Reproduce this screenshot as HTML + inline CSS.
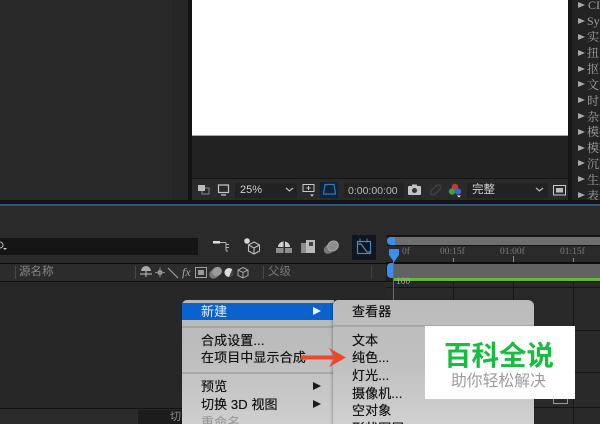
<!DOCTYPE html>
<html><head><meta charset="utf-8">
<style>
html,body{margin:0;padding:0;background:#282828}
#p{position:relative;width:600px;height:424px;overflow:hidden;background:#282828;font-family:"Liberation Sans","Noto Sans CJK SC",sans-serif;filter:blur(.35px)}
#p div,#p span{position:absolute;white-space:nowrap}
.m{color:#141414;font-size:13px;line-height:17px;letter-spacing:.1px;text-shadow:0 0 .4px #141414}
.r{color:#a2a2a2;font-size:12px;line-height:14px;left:578px;font-family:"Liberation Serif","Noto Serif CJK SC",serif}
.t{width:0;height:0;border-left:7px solid #a8a8a8;border-top:3.5px solid transparent;border-bottom:3.5px solid transparent;left:578px}
.a{width:0;height:0;border-left:8px solid #1a1a1a;border-top:4.5px solid transparent;border-bottom:4.5px solid transparent;left:313px}
.k{color:#7d7d7d;font-size:9.5px;font-family:"Liberation Serif",serif;top:246px;line-height:12px}
.h{background:#8a8a8a;width:1px}
</style></head><body><div id="p">
<!-- upper -->
<div style="left:0;top:0;width:172px;height:200px;background:#292929"></div>
<div style="left:172px;top:0;width:17px;height:200px;background:#262626"></div>
<div style="left:188px;top:0;width:4px;height:200px;background:#111"></div>
<div style="left:192px;top:0;width:376px;height:178px;background:#222"></div>
<div style="left:192px;top:0;width:376px;height:135px;background:#fff;border-bottom:1px solid #aaa"></div>
<div style="left:192px;top:178px;width:376px;height:22px;background:#2a2a2a;border-top:1px solid #151515;box-sizing:border-box"></div>
<div style="left:568px;top:0;width:4px;height:200px;background:#161616"></div>
<div style="left:572px;top:0;width:28px;height:200px;background:#232323"></div>
<!-- right list -->
<div class="t" style="top:2px"></div><div class="r" style="top:-2px;left:588px">CIN</div>
<div class="t" style="top:18px"></div><div class="r" style="top:14px;left:587px">Sym</div>
<div class="t" style="top:34px"></div><div class="r" style="top:30px;left:587px">实用</div>
<div class="t" style="top:50px"></div><div class="r" style="top:46px;left:587px">扭曲</div>
<div class="t" style="top:66px"></div><div class="r" style="top:62px;left:587px">抠像</div>
<div class="t" style="top:81px"></div><div class="r" style="top:78px;left:587px">文本</div>
<div class="t" style="top:97px"></div><div class="r" style="top:94px;left:587px">时间</div>
<div class="t" style="top:113px"></div><div class="r" style="top:110px;left:587px">杂色</div>
<div class="t" style="top:129px"></div><div class="r" style="top:125px;left:587px">模拟</div>
<div class="t" style="top:145px"></div><div class="r" style="top:141px;left:587px">模糊</div>
<div class="t" style="top:160px"></div><div class="r" style="top:157px;left:587px">沉浸</div>
<div class="t" style="top:176px"></div><div class="r" style="top:173px;left:587px">生成</div>
<div class="t" style="top:192px"></div><div class="r" style="top:189px;left:587px">表达</div>
<!-- viewer toolbar -->
<div style="left:235px;top:183px;width:62px;height:15px;background:#222"></div>
<div style="left:240px;top:183px;color:#d0d0d0;font-size:11px;line-height:15px">25%</div>
<div style="left:344px;top:183px;width:60px;height:15px;background:#232323"></div>
<div style="left:348px;top:183px;color:#b8b8b8;font-size:10.5px;line-height:16px">0:00:00:00</div>
<div style="left:320px;top:182px;width:18px;height:16px;background:#0e2238"></div>
<div style="left:467px;top:183px;width:81px;height:15px;background:#222"></div>
<div style="left:472px;top:182px;color:#cfcfcf;font-size:11.5px;line-height:17px">完整</div>
<svg style="position:absolute;left:0;top:0" width="600" height="210" fill="none">
<rect x="198" y="185" width="7" height="6" fill="#bbb"/><path d="M205 188h4v6h-7v-3" stroke="#888"/>
<path d="M218.500 185h10v7.500h-10zM221 195h5" stroke="#c4c4c4" stroke-width="1.200"/>
<path d="M286 188l3.500 3 3.500-3M536 188l3.500 3 3.500-3" stroke="#bbb" stroke-width="1.200"/>
<path d="M303 184.500h11v7h-11zM308.500 186v4M306.500 188h4" stroke="#c8c8c8"/><path d="M310 194.500h4l-2 2z" fill="#ddd"/>
<path d="M325 184.500h9l1.500 9.500h-12z" stroke="#3d75b8" stroke-width="1.200"/>
<rect x="408" y="186" width="13" height="9" rx="1" fill="#c4c4c4"/><rect x="412" y="184.500" width="5" height="2" fill="#c4c4c4"/><circle cx="414.500" cy="190.500" r="2.500" fill="#333"/>
<path d="M431 191l5-5a2.500 2.500 0 0 1 4 3l-5 5a2.500 2.500 0 0 1-4-3z" stroke="#404040" stroke-width="1.500"/>
<circle cx="455" cy="187" r="3.200" fill="#c43a3a"/><circle cx="452" cy="191.500" r="3.200" fill="#3f9c48"/><circle cx="458" cy="191.500" r="3.200" fill="#3a66c0"/><path d="M457 195.500h4l-2 2z" fill="#eee"/>
<rect x="553.500" y="185.500" width="12" height="9.500" stroke="#c8c8c8"/><rect x="556" y="188" width="7" height="4.500" fill="#bbb"/>
</svg>
<!-- divider -->
<div style="left:0;top:200px;width:600px;height:4px;background:#121518"></div>
<div style="left:0;top:204px;width:600px;height:2px;background:#33557f"></div>
<div style="left:0;top:206px;width:600px;height:57px;background:#2a2a2a"></div>
<!-- search -->
<div style="left:0;top:238px;width:198px;height:17px;background:#151515"></div>
<svg style="position:absolute;left:0;top:240px" width="10" height="12" fill="none"><circle cx="0" cy="5" r="3" stroke="#bbb"/><path d="M3 8h4l-2 2z" fill="#ccc"/></svg>
<!-- timeline tool icons -->
<svg style="position:absolute;left:205px;top:232px" width="180" height="30" fill="none">
<rect x="8" y="9" width="7" height="2.500" fill="#ddd"/><path d="M15 10.500h6M21 10.500v8M21 12.500h3M21 15.500h3M21 19h2" stroke="#b5b5b5"/>
<circle cx="42" cy="9" r="2.800" fill="#d8d8d8"/><path d="M49 10l5.500 3v6l-5.500 3-5.500-3v-6zM43.500 13l5.500 3 5.500-3M49 16v6" stroke="#bdbdbd" stroke-width="1.100"/>
<rect x="71" y="16" width="16" height="5" fill="#8d8d8d"/><path d="M73 15a6 5.500 0 0 1 12 0z" fill="#cfcfcf"/><rect x="78.500" y="9" width="1.500" height="12" fill="#333"/>
<rect x="96" y="11" width="8" height="10" fill="#8e8e8e"/><rect x="101" y="8" width="9" height="13" fill="#bbb"/><rect x="104" y="10" width="4" height="4" fill="#444"/>
<ellipse cx="124" cy="17" rx="5.500" ry="4.500" transform="rotate(-35 124 17)" fill="#777"/><ellipse cx="128" cy="14" rx="5.500" ry="4.800" transform="rotate(-35 128 14)" stroke="#aaa" fill="#8e8e8e"/>
</svg>
<div style="left:352px;top:235px;width:24px;height:25px;background:#10161e"></div>
<svg style="position:absolute;left:352px;top:235px" width="24" height="25" fill="none"><rect x="5.500" y="6.500" width="13" height="12" stroke="#4c86c4" stroke-width="1.200"/><path d="M8 3.500v4M15 3.500v4" stroke="#4c86c4"/><path d="M6 9h3l6 8h3" stroke="#4c86c4" stroke-width="1.200"/></svg>
<!-- header row -->
<div style="left:0;top:263px;width:386px;height:19px;background:#2c2c2c;border-top:1px solid #0c0c0c;border-bottom:1px solid #0c0c0c;box-sizing:border-box"></div>
<div style="left:15px;top:266px;width:1px;height:13px;background:#4a4a4a"></div>
<div style="left:19px;top:264px;color:#868686;font-size:11.500px;line-height:17px">源名称</div>
<div style="left:135px;top:266px;width:1px;height:13px;background:#4a4a4a"></div>
<svg style="position:absolute;left:136px;top:264px" width="130" height="17" fill="none">
<path d="M5 7a5 5 0 0 1 10 0z" fill="#aaa"/><path d="M10 4v9M4 10h12" stroke="#aaa" stroke-width="1.200"/>
<circle cx="24" cy="8.500" r="2.500" fill="#a8a8a8"/><path d="M24 3.500v10M19 8.500h10" stroke="#888"/>
<path d="M32 4l10 10" stroke="#a0a0a0" stroke-width="1.200"/>
<rect x="59.500" y="3.500" width="11" height="10" stroke="#a0a0a0"/><rect x="62" y="6" width="6" height="5" fill="#999"/>
<ellipse cx="78" cy="10" rx="5" ry="4.500" transform="rotate(-35 78 10)" fill="#777"/><ellipse cx="81" cy="7.500" rx="5" ry="4.500" transform="rotate(-35 81 7.500)" fill="#9a9a9a"/>
<circle cx="93" cy="8.500" r="4.500" fill="#ddd"/><path d="M93 13a4.500 4.500 0 0 0 3.200-7.700z" fill="#444"/>
<path d="M107 3.500l5 2.500v5.500l-5 2.500-5-2.500V6zM102 6l5 2.500 5-2.500M107 8.500V14" stroke="#a8a8a8"/>
</svg>
<div style="left:182px;top:264px;color:#a8a8a8;font-size:12px;line-height:17px;font-style:italic;font-family:'Liberation Serif',serif">fx</div>
<div style="left:263px;top:266px;width:1px;height:13px;background:#4a4a4a"></div>
<div style="left:268px;top:264px;color:#777;font-size:11.500px;line-height:17px">父级</div>
<div style="left:371px;top:266px;width:1px;height:13px;background:#444"></div>
<!-- body -->
<div style="left:0;top:282px;width:386px;height:126px;background:#272727"></div>
<div style="left:0;top:408px;width:386px;height:16px;background:#2b2b2b;border-top:1px solid #111;box-sizing:border-box"></div>
<div style="left:138px;top:410px;width:46px;height:14px;background:#1c1c1c"></div>
<div style="left:170px;top:410px;color:#8b8b8b;font-size:11px;line-height:14px">切</div>
<!-- timeline -->
<div style="left:386px;top:206px;width:214px;height:218px;background:#2a2a2a"></div>
<div style="left:386px;top:235px;width:214px;height:2px;background:#151515"></div>
<div style="left:392px;top:237px;width:208px;height:8px;background:#6e6e6e"></div>
<div style="left:386px;top:245px;width:214px;height:1px;background:#141414"></div>
<div style="left:387px;top:237px;width:8px;height:8px;background:#3d8ee8;border-radius:4px 0 0 4px"></div>
<div class="k" style="left:402px">0f</div>
<div class="k" style="left:440px">00:15f</div>
<div class="k" style="left:500px">01:00f</div>
<div class="k" style="left:560px">01:15f</div>
<div class="h" style="left:453px;top:258px;height:4px"></div>
<div class="h" style="left:513px;top:256px;height:6px"></div>
<div class="h" style="left:573px;top:258px;height:4px"></div>
<div style="left:386px;top:262px;width:214px;height:2px;background:#0e0e0e"></div>
<div style="left:392px;top:264px;width:208px;height:14px;background:#626262"></div>
<div style="left:386px;top:264px;width:6px;height:18px;background:#1c1c1c"></div>
<div style="left:387px;top:263px;width:7px;height:15px;background:#3d8ee8;border-radius:4px 0 0 4px"></div>
<div style="left:393px;top:278px;width:207px;height:3px;background:#62bb2c"></div>
<div style="left:386px;top:281px;width:214px;height:1px;background:#141414"></div>
<div style="left:386px;top:282px;width:214px;height:142px;background:#292929"></div>
<div style="left:386px;top:287px;width:214px;height:1px;background:#151515"></div>
<div style="left:386px;top:330px;width:214px;height:1px;background:#151515"></div>
<div style="left:386px;top:372px;width:214px;height:1px;background:#151515"></div>
<div style="left:534px;top:407px;width:66px;height:1px;background:#151515"></div>
<div style="left:453px;top:282px;width:1px;height:142px;background:#171717"></div>
<div style="left:513px;top:282px;width:1px;height:142px;background:#171717"></div>
<div style="left:573px;top:282px;width:1px;height:142px;background:#171717"></div>
<div style="left:396px;top:277px;color:#a8a8a8;font-size:9.500px;font-family:'Liberation Serif',serif;line-height:11px">100</div>
<div style="left:393px;top:250px;width:1px;height:50px;background:#3a76b8"></div>
<svg style="position:absolute;left:388px;top:248px" width="12" height="14"><path d="M1 1h10v6l-5 7-5-7z" fill="#3d8ee8"/></svg>
<div style="left:553px;top:394px;width:15px;height:10px;border:1px solid #999;box-sizing:border-box"></div>
<!-- menu -->
<div style="left:182px;top:300px;width:152px;height:130px;border-radius:5px 0 0 0;background:linear-gradient(#b8b8b8 0%,#bdbdbd 40%,#d0d0d0 100%)"></div>
<div style="left:182px;top:303px;width:152px;height:17px;background:#0b62cc"></div>
<div style="left:182px;top:326px;width:152px;height:2px;background:#a4a4a4"></div>
<div style="left:182px;top:372px;width:152px;height:2px;background:#a8a8a8"></div>
<div class="m" style="left:201px;top:303px;color:#e8f0ff;text-shadow:none">新建</div>
<div class="m" style="left:201px;top:332px">合成设置...</div>
<div class="m" style="left:201px;top:349px">在项目中显示合成</div>
<div class="m" style="left:201px;top:378px">预览</div>
<div class="m" style="left:201px;top:396px">切换 3D 视图</div>
<div class="m" style="left:201px;top:414px;color:#959595;text-shadow:none">重命名</div>
<div class="a" style="top:307px;border-left-color:#f0f6ff"></div>
<div class="a" style="top:382px"></div>
<div class="a" style="top:400px"></div>
<!-- submenu -->
<div style="left:333px;top:300px;width:201px;height:130px;border-radius:5px 6px 0 0;background:linear-gradient(#bcbcbc 0%,#c0c0c0 50%,#d2d2d2 100%);box-shadow:-1px 0 2px rgba(0,0,0,.25)"></div>
<div style="left:333px;top:325px;width:201px;height:2px;background:#a6a6a6"></div>
<div class="m" style="left:352px;top:303px">查看器</div>
<div class="m" style="left:352px;top:332px">文本</div>
<div class="m" style="left:352px;top:349px">纯色...</div>
<div class="m" style="left:352px;top:367px">灯光...</div>
<div class="m" style="left:352px;top:385px">摄像机...</div>
<div class="m" style="left:352px;top:402px">空对象</div>
<div class="m" style="left:352px;top:420px">形状图层</div>
<!-- arrow -->
<svg style="position:absolute;left:296px;top:345px" width="60" height="24"><path d="M5 10.500h32.500L33 3l17 9.500L33 22l4.500-7.500H5z" fill="#e8492f"/></svg>
<!-- watermark -->
<div style="left:425px;top:326px;width:150px;height:73px;background:#fff"></div>
<div style="left:444px;top:340px;color:#17bd3f;font-size:27.500px;font-weight:700;line-height:32px;letter-spacing:0">百科全说</div>
<div style="left:451px;top:372px;color:#9c9c9c;font-size:15.800px;line-height:20px">助你轻松解决</div>
</div></body></html>
